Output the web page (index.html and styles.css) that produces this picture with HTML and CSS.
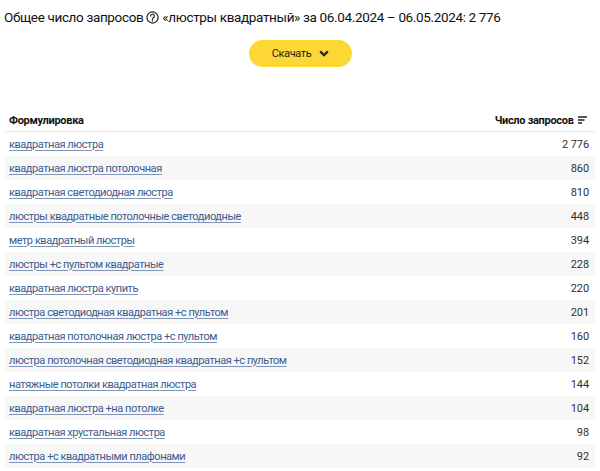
FILE: index.html
```html
<!DOCTYPE html>
<html lang="ru">
<head>
<meta charset="utf-8">
<link rel="stylesheet" href="styles.css">
</head>
<body>
<div class="page">
  <h1 class="title">Общее число запросов <span class="help"><svg width="13" height="13" viewBox="0 0 14 14"><circle cx="7" cy="7" r="6" fill="none" stroke="#222" stroke-width="1.3"/><path d="M5 5.5a2 2 0 1 1 2.8 1.8c-.5.25-.8.6-.8 1.2v.4" fill="none" stroke="#222" stroke-width="1.3" stroke-linecap="round"/><circle cx="7" cy="10.4" r=".8" fill="#222"/></svg></span> «люстры квадратный» за 06.04.2024 – 06.05.2024: 2 776</h1>
  <div class="actions">
    <button class="btn">Скачать <svg class="chev" width="10" height="7" viewBox="0 0 10 7"><path d="M1.2 1.4 5 5.2l3.8-3.8" fill="none" stroke="#222" stroke-width="2.2"/></svg></button>
  </div>
  <table class="tbl">
    <thead>
      <tr><th class="c-q">Формулировка</th><th class="c-n">Число запросов <svg class="sort" width="9" height="8" viewBox="0 0 9 8"><path d="M0 1h9M0 4h6.5M0 7h4" stroke="#222" stroke-width="1.3"/></svg></th></tr>
    </thead>
    <tbody>
      <tr><td><a href="#">квадратная люстра</a></td><td class="n">2 776</td></tr>
      <tr><td><a href="#">квадратная люстра потолочная</a></td><td class="n">860</td></tr>
      <tr><td><a href="#">квадратная светодиодная люстра</a></td><td class="n">810</td></tr>
      <tr><td><a href="#">люстры квадратные потолочные светодиодные</a></td><td class="n">448</td></tr>
      <tr><td><a href="#">метр квадратный люстры</a></td><td class="n">394</td></tr>
      <tr><td><a href="#">люстры +с пультом квадратные</a></td><td class="n">228</td></tr>
      <tr><td><a href="#">квадратная люстра купить</a></td><td class="n">220</td></tr>
      <tr><td><a href="#">люстра светодиодная квадратная +с пультом</a></td><td class="n">201</td></tr>
      <tr><td><a href="#">квадратная потолочная люстра +с пультом</a></td><td class="n">160</td></tr>
      <tr><td><a href="#">люстра потолочная светодиодная квадратная +с пультом</a></td><td class="n">152</td></tr>
      <tr><td><a href="#">натяжные потолки квадратная люстра</a></td><td class="n">144</td></tr>
      <tr><td><a href="#">квадратная люстра +на потолке</a></td><td class="n">104</td></tr>
      <tr><td><a href="#">квадратная хрустальная люстра</a></td><td class="n">98</td></tr>
      <tr><td><a href="#">люстра +с квадратными плафонами</a></td><td class="n">92</td></tr>
    </tbody>
  </table>
</div>
</body>
</html>
```
FILE: styles.css
```css
html, body { margin: 0; padding: 0; background: #fff; }
body { font-family: Roboto, "Open Sans", sans-serif; color: #222; }
.page { padding: 8px 4px 0 4px; }
.title { margin: 0; font-size: 13.5px; letter-spacing: -0.35px; font-weight: 400; line-height: 18px; color: #111; }
.help { display: inline-block; vertical-align: -2px; }
.help svg { display: block; }
.actions { display: flex; justify-content: center; padding-top: 14px; }
.btn { display: flex; align-items: center; gap: 8px; height: 27px; width: 103px; justify-content: center; border: 0; border-radius: 14px; background: #fdd835; font-family: inherit; font-size: 11px; letter-spacing: -0.4px; color: #222; padding: 0; margin-left: 1px; }
.chev { display: block; }
.tbl { width: calc(100% - 2px); margin: 42px 0 0 1px; border-collapse: collapse; font-size: 11px; }
.tbl th { font-weight: 700; text-align: left; height: 22px; padding: 0 4px; border-bottom: 1px solid #e6e6e6; color: #111; vertical-align: middle; letter-spacing: -0.3px; }
.tbl th.c-n { text-align: right; padding-right: 8px; }
.sort { vertical-align: 0; margin-left: 2px; }
.tbl td { height: 24px; padding: 0 4px; vertical-align: middle; }
.tbl td.n { text-align: right; padding-right: 6px; color: #333; letter-spacing: -0.1px; }
.tbl tbody tr:nth-child(even) td { background: #f7f7f7; }
.tbl a { color: #3c5c8f; letter-spacing: -0.45px; text-decoration: underline; text-decoration-color: #7f95b8; text-underline-offset: 2px; }
```
